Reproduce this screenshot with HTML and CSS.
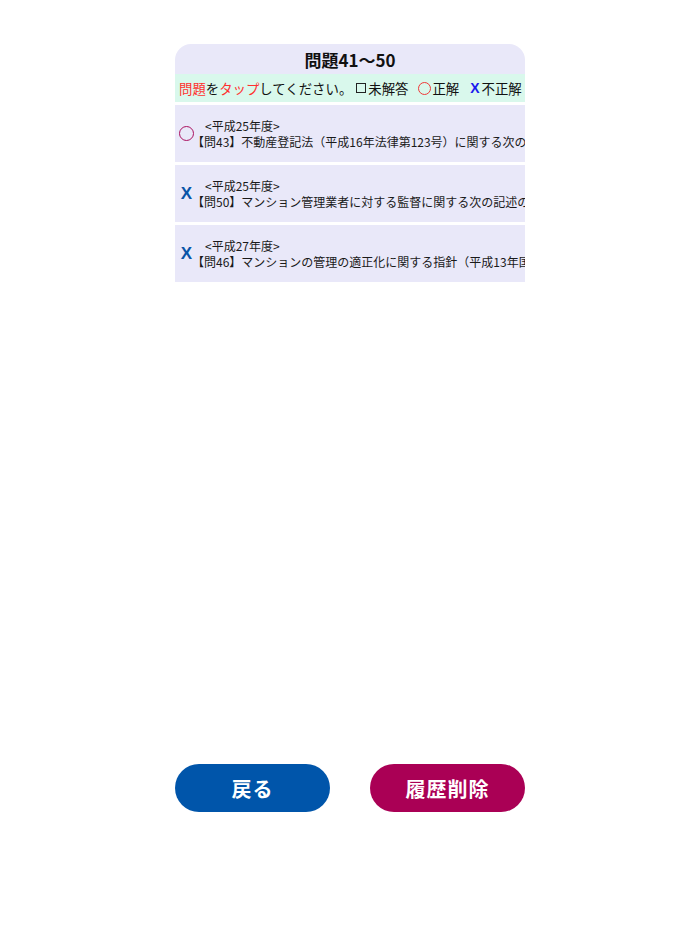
FILE: index.html
```html
<!DOCTYPE html>
<html lang="ja">
<head>
<meta charset="utf-8">
<title>問題41〜50</title>
<link rel="stylesheet" href="styles.css">
</head>
<body>
<div class="page">
  <div class="card">
    <div class="card-title">問題41〜50</div>
    <div class="legend"><span class="red">問題</span>を<span class="red">タップ</span>してください。<span class="box"></span>未解答<span class="ok-mark"></span>正解<span class="ng-mark">X</span>不正解</div>
    <ul class="list">
      <li class="row">
        <span class="icon icon-ok"></span>
        <div class="row-text">
          <div class="year">&lt;平成25年度&gt;</div>
          <div class="q">【問43】不動産登記法（平成16年法律第123号）に関する次の記述のうち、誤っているものはどれか。</div>
        </div>
      </li>
      <li class="row">
        <span class="icon icon-ng">X</span>
        <div class="row-text">
          <div class="year">&lt;平成25年度&gt;</div>
          <div class="q">【問50】マンション管理業者に対する監督に関する次の記述のうち、誤っているものはどれか。</div>
        </div>
      </li>
      <li class="row">
        <span class="icon icon-ng">X</span>
        <div class="row-text">
          <div class="year">&lt;平成27年度&gt;</div>
          <div class="q">【問46】マンションの管理の適正化に関する指針（平成13年国土交通省告示第1288号）</div>
        </div>
      </li>
    </ul>
  </div>
  <div class="spacer"></div>
  <div class="buttons">
    <button class="btn btn-back">戻る</button>
    <button class="btn btn-delete">履歴削除</button>
  </div>
</div>
</body>
</html>
```

FILE: styles.css
```css
html, body {
  margin: 0;
  padding: 0;
  background: #ffffff;
}
body {
  font-family: "Noto Sans CJK JP", "Noto Sans", sans-serif;
  color: #111111;
}
.page {
  width: 350px;
  margin: 0 auto;
  padding-top: 44px;
  display: flex;
  flex-direction: column;
  min-height: 934px;
  box-sizing: border-box;
}
.card {
  display: flex;
  flex-direction: column;
}
.card-title {
  background: #e9e8f9;
  border-radius: 16px 16px 0 0;
  height: 30px;
  display: flex;
  align-items: center;
  justify-content: center;
  font-size: 17px;
  font-weight: 700;
}
.legend {
  background: #d9f8ec;
  height: 28px;
  display: flex;
  align-items: center;
  padding-left: 4px;
  font-size: 13.4px;
  white-space: nowrap;
}
.red { color: #ff3030; }
.box {
  display: inline-block;
  box-sizing: border-box;
  width: 10px;
  height: 10px;
  border: 1.4px solid #222;
  margin: 0 2px 0 4px;
}
.ok-mark {
  display: inline-block;
  box-sizing: border-box;
  width: 13px;
  height: 13px;
  border: 1.6px solid #f03838;
  border-radius: 50%;
  margin: 0 1px 0 10px;
}
.ng-mark {
  color: #1a1aee;
  font-weight: 700;
  font-size: 14px;
  margin: 0 2px 0 11px;
  font-family: "Liberation Sans", sans-serif;
}
.list {
  list-style: none;
  margin: 0;
  padding: 0;
}
.row {
  margin-top: 3px;
  height: 57px;
  background: #e9e8f9;
  display: flex;
  align-items: center;
  padding-left: 4px;
  overflow: hidden;
}
.icon {
  flex: 0 0 auto;
  width: 15px;
  display: flex;
  justify-content: center;
  margin-right: -2px;
}
.icon-ok::before {
  content: "";
  display: block;
  box-sizing: border-box;
  width: 15px;
  height: 15px;
  border: 1.6px solid #aa1060;
  border-radius: 50%;
}
.icon-ng {
  color: #0a55a8;
  font-weight: 700;
  font-size: 17px;
  font-family: "Liberation Sans", sans-serif;
}
.row-text {
  min-width: 0;
  flex: 1;
  font-size: 12px;
  line-height: 16px;
  color: #1a1a1a;
  white-space: nowrap;
  overflow: hidden;
}
.year {
  padding-left: 13px;
}
.spacer { flex: 1; }
.buttons {
  display: flex;
  justify-content: space-between;
  margin-bottom: 122px;
}
.btn {
  width: 155px;
  height: 48px;
  border: none;
  border-radius: 24px;
  color: #ffffff;
  font-family: "Noto Sans CJK JP", sans-serif;
  font-size: 20px;
  font-weight: 700;
  letter-spacing: 1px;
}
.btn-back { background: #0055aa; }
.btn-delete { background: #aa0055; }
```
